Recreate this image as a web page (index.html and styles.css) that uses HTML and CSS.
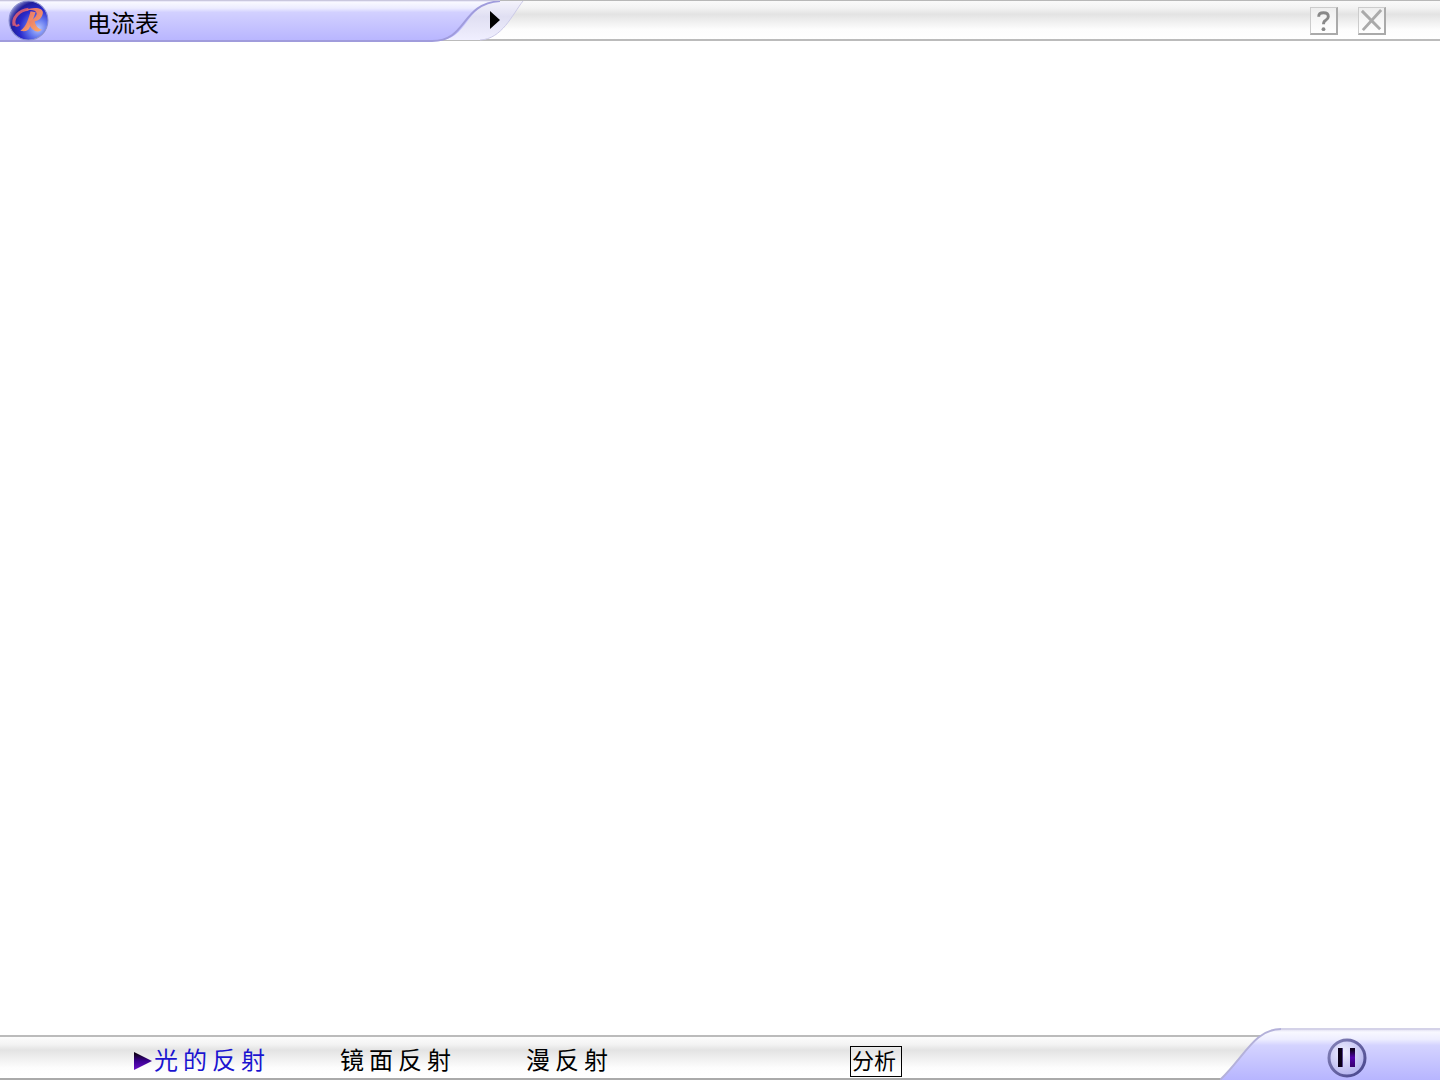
FILE: index.html
```html
<!DOCTYPE html>
<html lang="zh-Hans">
<head>
    <meta charset="UTF-8">
    <meta name="viewport" content="width=device-width, initial-scale=1.0">
    <title>电流表</title>
    <link rel="stylesheet" href="styles.css">
</head>
<body>
    <!-- 顶部标题栏 -->
    <header class="top-bar">
        <div class="title-tab">
            <svg class="tab-shape" viewBox="0 0 524 42" aria-hidden="true">
                <defs>
                    <linearGradient id="tabFill" x1="0" y1="0" x2="0" y2="1">
                        <stop offset="0" stop-color="#d4d2ee"/>
                        <stop offset=".06" stop-color="#f8f8ff"/>
                        <stop offset=".2" stop-color="#ececff"/>
                        <stop offset=".3" stop-color="#d2d0ff"/>
                        <stop offset="1" stop-color="#b8b5ff"/>
                    </linearGradient>
                    <linearGradient id="edgeFill" x1="0" y1="0" x2="0" y2="1">
                        <stop offset="0" stop-color="#f4f3fc"/>
                        <stop offset=".4" stop-color="#e0dff2"/>
                        <stop offset="1" stop-color="#f0efff"/>
                    </linearGradient>
                </defs>
                <path d="M430 40 V1 H523 C512 15 502 39 480 40 Z" fill="url(#edgeFill)"/>
                <path d="M523 1 C512 15 502 39 480 40" fill="none" stroke="#cccae8"/>
                <path d="M0 0 H500 C465 2 470 41 435 41 H0 Z" fill="url(#tabFill)"/>
                <path d="M0 41 H432 C468 41 460 4 500 1" fill="none" stroke="#a09cdc" stroke-width="2"/>
                <path d="M0 .5 H500" stroke="#c9c7de"/>
            </svg>
            <svg class="logo" viewBox="0 0 40 40" role="img" aria-label="R">
                <defs>
                    <radialGradient id="ball" cx=".75" cy=".7" r=".8">
                        <stop offset="0" stop-color="#b4c4ff"/>
                        <stop offset=".3" stop-color="#6478ee"/>
                        <stop offset=".6" stop-color="#2a2acb"/>
                        <stop offset=".85" stop-color="#211e9b"/>
                        <stop offset="1" stop-color="#7779c4"/>
                    </radialGradient>
                    <linearGradient id="ribbon" x1="0" y1="0" x2="1" y2="1">
                        <stop offset="0" stop-color="#e0666c"/>
                        <stop offset=".5" stop-color="#ee8468"/>
                        <stop offset="1" stop-color="#ffb06c"/>
                    </linearGradient>
                </defs>
                <circle cx="20" cy="20" r="19" fill="url(#ball)" stroke="#8a8fd0"/>
                <path d="M20 9 C11 10 4 17 6 25" fill="none" stroke="#c9587a" stroke-width="3"/>
                <path d="M6 22 Q7 27 11 24" fill="none" stroke="#c9587a" stroke-width="2"/>
                <path d="M22 11 C20 18 18 26 12 30 C17 31 20 30 21 27 L27 12 Z" fill="url(#ribbon)"/>
                <path d="M15 11 C23 6 35 7 34 13 C33 18 30 20 26 21 C27 25 29 28 33 29 C27 34 21 27 20 21 C25 19 28 16 28 13 C27 9 21 9 15 11 Z" fill="url(#ribbon)"/>
            </svg>
            <h1>电流表</h1>
            <button class="expand" type="button" aria-label="展开">
                <svg viewBox="0 0 10 18"><path d="M0 0 L10 9 L0 18 Z"/></svg>
            </button>
        </div>
        <div class="window-tools">
            <button type="button" aria-label="帮助">
                <svg viewBox="0 0 26 26">
                    <path d="M8 9 Q8 5 13 5 Q18 5 18 9 Q18 11 15 13 Q13 14 13 17" fill="none" stroke="#888" stroke-width="3"/>
                    <circle cx="13" cy="22" r="2" fill="#888"/>
                </svg>
            </button>
            <button type="button" aria-label="关闭">
                <svg viewBox="0 0 26 26">
                    <path d="M3 3 L22 22 M23 2 L4 23" fill="none" stroke="#aaa" stroke-width="3"/>
                </svg>
            </button>
        </div>
    </header>

    <!-- 演示区域 -->
    <main class="stage"></main>

    <!-- 底部导航栏 -->
    <footer class="bottom-bar">
        <nav class="sections">
            <a class="current" href="#reflection">
                <svg class="marker" viewBox="0 0 18 20" aria-hidden="true">
                    <defs>
                        <linearGradient id="markerFill" x1="0" y1="0" x2="0" y2="1">
                            <stop offset=".1" stop-color="#100018"/>
                            <stop offset=".5" stop-color="#3b0091"/>
                            <stop offset="1" stop-color="#6a10c8"/>
                        </linearGradient>
                    </defs>
                    <path d="M0 1 L18 10 L0 19 Z" fill="url(#markerFill)"/>
                </svg>光的反射</a>
            <a href="#mirror">镜面反射</a>
            <a href="#diffuse">漫反射</a>
        </nav>
        <button class="analyse" type="button">分析</button>
        <div class="player">
            <svg class="player-shape" viewBox="0 0 220 52" aria-hidden="true">
                <defs>
                    <linearGradient id="playerFill" x1="0" y1="0" x2="0" y2="1">
                        <stop offset="0" stop-color="#dddcf0"/>
                        <stop offset=".06" stop-color="#f8f8ff"/>
                        <stop offset=".2" stop-color="#eeeeff"/>
                        <stop offset=".32" stop-color="#d4d3ff"/>
                        <stop offset="1" stop-color="#b7b5ff"/>
                    </linearGradient>
                </defs>
                <path d="M0 52 C25 28 35 1 61 1 H220 V52 Z" fill="url(#playerFill)"/>
                <path d="M0 52 C25 28 35 1 61 1" fill="none" stroke="#b4b1da" stroke-width="2"/>
                <path d="M61 1 H220" stroke="#d4d2e8" stroke-width="2"/>
            </svg>
            <button class="pause" type="button" aria-label="暂停">
                <svg viewBox="0 0 40 40">
                    <defs>
                        <radialGradient id="pauseFill" cx=".4" cy=".35" r=".6">
                            <stop offset="0" stop-color="#f0efff"/>
                            <stop offset="1" stop-color="#b9b8f0"/>
                        </radialGradient>
                        <linearGradient id="pauseEdge" x1="0" y1="0" x2="1" y2="1">
                            <stop offset="0" stop-color="#8583b8"/>
                            <stop offset="1" stop-color="#48458c"/>
                        </linearGradient>
                        <linearGradient id="barFill" x1="0" y1="0" x2="0" y2="1">
                            <stop offset=".1" stop-color="#100020"/>
                            <stop offset=".5" stop-color="#5200ac"/>
                            <stop offset="1" stop-color="#38006b"/>
                        </linearGradient>
                    </defs>
                    <circle cx="20" cy="20" r="18" fill="url(#pauseFill)" stroke="url(#pauseEdge)" stroke-width="3"/>
                    <path d="M11 10 H15 V29 H11 Z" fill="#0c0018"/>
                    <path d="M15 10 H16 V29 H15 Z" fill="#55458c"/>
                    <path d="M23 10 H28 V29 H23 Z" fill="url(#barFill)"/>
                </svg>
            </button>
        </div>
    </footer>
</body>
</html>
```
FILE: styles.css
```css
* {
    box-sizing: border-box;
}

body {
    margin: 0;
    min-height: 100vh;
    display: flex;
    flex-direction: column;
    font-family: "Liberation Sans", "Noto Sans CJK SC", sans-serif;
    font-size: 24px;
    line-height: 32px;
    color: #000;
    background: #fff;
}

svg {
    display: block;
}

button {
    padding: 0;
    border: 0;
    background: none;
    color: inherit;
    font: inherit;
    cursor: pointer;
}

/* 标题栏 */
.top-bar {
    display: flex;
    justify-content: space-between;
    height: 41px;
    border-top: 1px solid #b8b8b8;
    border-bottom: 2px solid #bbb;
    background: linear-gradient(#fafafa 0%, #f3f3f3 18%, #e3e3e3 35%, #f0f0f0 55%, #fdfdfd 75%, #fff 100%);
}

.title-tab {
    position: relative;
    display: flex;
    align-items: center;
    width: 524px;
    padding-left: 8px;
}

.tab-shape {
    position: absolute;
    top: -1px;
    left: 0;
    width: 524px;
    height: 42px;
}

.logo {
    position: relative;
    width: 41px;
    height: 41px;
}

h1 {
    position: relative;
    margin: 8px 0 0 38px;
    font-size: 24px;
    font-weight: 400;
}

.expand {
    position: relative;
    margin: 0 24px 0 auto;
}

.expand svg {
    width: 10px;
    height: 18px;
}

/* 帮助和关闭 */
.window-tools {
    display: flex;
    align-items: center;
    gap: 20px;
    padding: 2px 54px 0 0;
}

.window-tools button {
    width: 28px;
    height: 28px;
    border: 1px solid #ccc;
    border-right: 2px solid #aaa;
    border-bottom: 2px solid #aaa;
    background: linear-gradient(#eee, #fff);
}

.stage {
    flex: 1;
}

/* 底部导航栏 */
.bottom-bar {
    display: flex;
    align-items: center;
    height: 45px;
    padding-left: 134px;
    border-top: 2px solid #bbb;
    border-bottom: 2px solid #aaa;
    background: linear-gradient(#fcfcfc 0%, #f3f3f3 18%, #e3e3e3 32%, #efefef 52%, #fdfdfd 75%, #fff 100%);
}

.sections {
    display: flex;
    gap: 70px;
    padding-top: 6px;
}

.sections a {
    display: flex;
    align-items: center;
    letter-spacing: 5px;
    color: #000;
    text-decoration: none;
}

.sections .current {
    color: #1b14d0;
}

.marker {
    width: 18px;
    height: 20px;
    margin-right: 2px;
}

.analyse {
    width: 52px;
    height: 31px;
    margin: 8px 0 0 237px;
    padding-left: 1px;
    border: 1px solid #000;
    font-size: 22px;
    line-height: 28px;
    text-align: left;
}

/* 播放控制 */
.player {
    position: relative;
    align-self: stretch;
    display: flex;
    align-items: center;
    justify-content: flex-end;
    width: 220px;
    margin-left: auto;
    padding-right: 73px;
}

.player-shape {
    position: absolute;
    right: 0;
    bottom: -2px;
    width: 220px;
    height: 52px;
}

.pause {
    position: relative;
}

.pause svg {
    width: 40px;
    height: 40px;
}
```
